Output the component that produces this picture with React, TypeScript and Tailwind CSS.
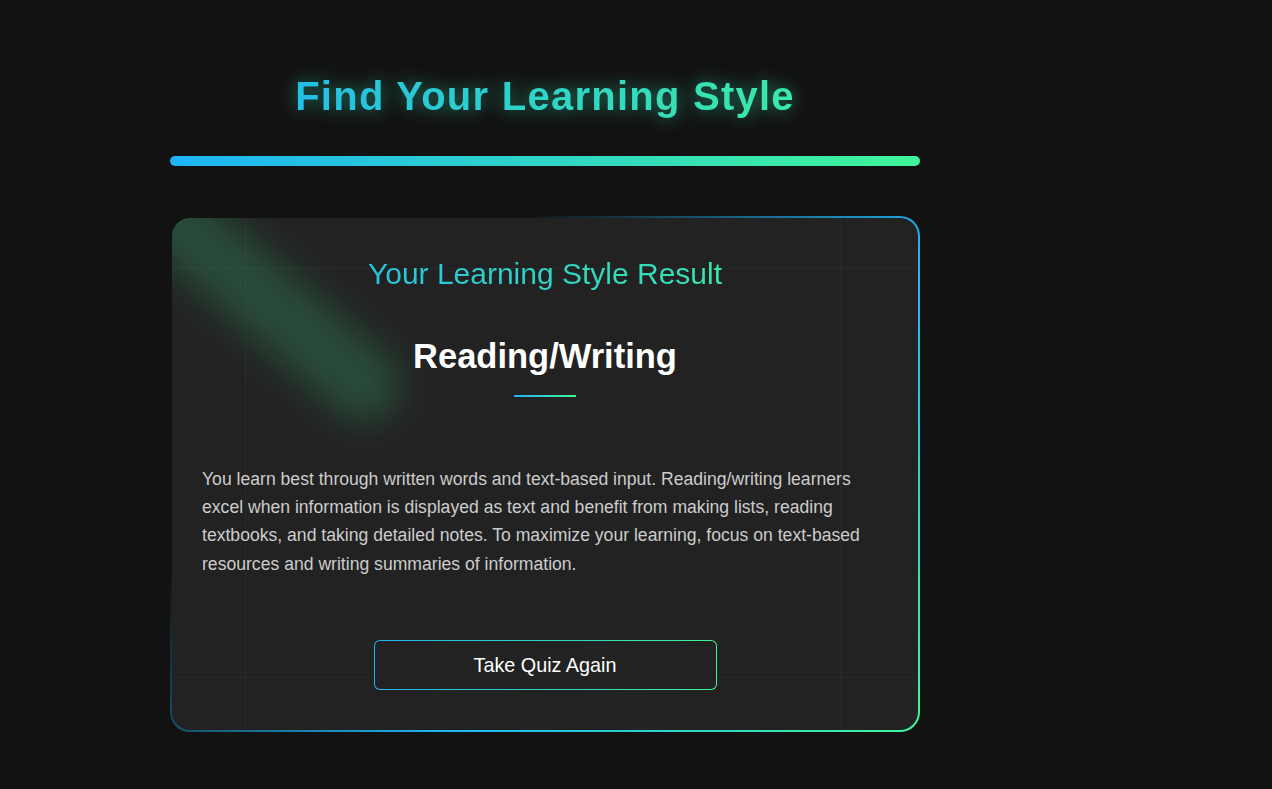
import React from 'react';

const description =
  'You learn best through written words and text-based input. Reading/writing learners excel when information is displayed as text and benefit from making lists, reading textbooks, and taking detailed notes. To maximize your learning, focus on text-based resources and writing summaries of information.';

function ResultCard() {
  return (
    <div className="rounded-[20px] bg-[linear-gradient(135deg,transparent_28%,#1eb4f5_62%,#40f598_100%)] p-[2px]">
      {/* faint frame lines live in the background image */}
      <div className="relative overflow-hidden rounded-[18px] bg-[#222222] bg-[linear-gradient(90deg,transparent_73px,rgba(255,255,255,0.03)_73px_74px,transparent_74px_668px,rgba(255,255,255,0.03)_668px_669px,transparent_669px),linear-gradient(180deg,transparent_50px,rgba(255,255,255,0.03)_50px_51px,transparent_51px_459px,rgba(255,255,255,0.03)_459px_460px,transparent_460px)] px-[30px] pb-[40px] pt-[39px]">
        {/* soft glow streak */}
        <div className="pointer-events-none absolute left-[-88px] top-[40px] h-[72px] w-[350px] rotate-[41deg] rounded-full bg-[rgba(64,245,152,0.2)] blur-[18px]" />

        <div className="relative flex flex-col items-center">
          <h2 className="w-full bg-[linear-gradient(90deg,#1eb4f5,#40f598)] bg-clip-text text-center text-[30px] font-normal leading-[1.15] text-transparent">
            Your Learning Style Result
          </h2>
          <h3 className="mt-[45px] text-center text-[34.5px] font-bold leading-[1.15] text-white">
            Reading/Writing
          </h3>
          <div className="mt-[19px] h-[2px] w-[62px] bg-[linear-gradient(90deg,#1eb4f5,#40f598)]" />
          <p className="mt-[68px] w-full text-left text-[17.6px] leading-[1.6] text-[#cccccc]">
            {description}
          </p>
          <div className="mt-[62px] w-1/2 rounded-[6px] bg-[linear-gradient(90deg,#1eb4f5,#40f598)] p-px">
            <button className="h-[48px] w-full rounded-[5px] bg-[#222222] pt-[2px] text-[19.8px] text-white">
              Take Quiz Again
            </button>
          </div>
        </div>
      </div>
    </div>
  );
}

export default function App() {
  return (
    <div className="min-h-screen bg-[#121212] font-['Liberation_Sans',Arial,sans-serif]">
      <div className="ml-[170px] w-[750px] pt-[73px]">
        <h1 className="bg-[linear-gradient(90deg,#1eb4f5,#40f598)] bg-clip-text text-center text-[40px] font-bold leading-[1.15] tracking-[1.25px] text-transparent drop-shadow-[0_0_9px_rgba(52,225,180,0.55)]">
          Find Your Learning Style
        </h1>
        <div className="mt-[37px] h-[10px] rounded-full bg-[linear-gradient(90deg,#1eb4f5,#40f598)]" />
        <div className="mt-[50px]">
          <ResultCard />
        </div>
      </div>
    </div>
  );
}
